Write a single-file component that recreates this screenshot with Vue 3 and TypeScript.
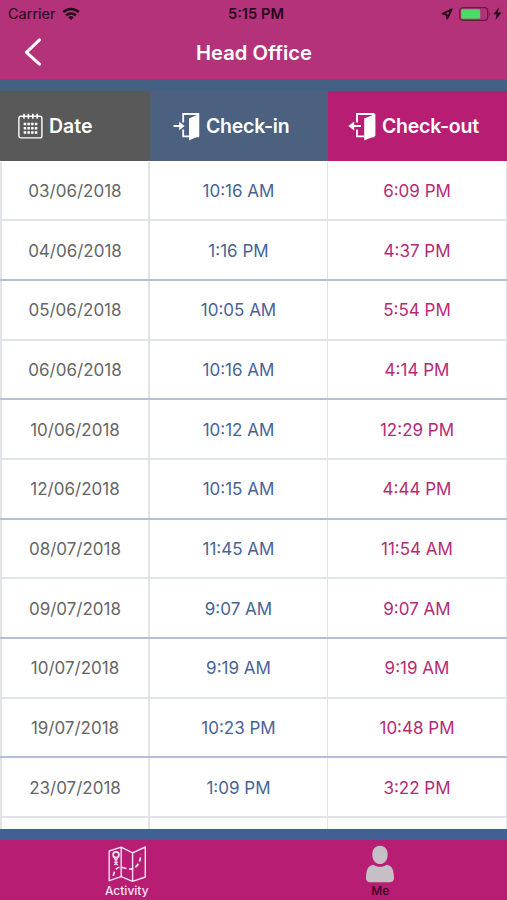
<script setup lang="ts">
interface Visit {
  date: string
  checkIn: string
  checkOut: string
}

const visits: Visit[] = [
  { date: '03/06/2018', checkIn: '10:16 AM', checkOut: '6:09 PM' },
  { date: '04/06/2018', checkIn: '1:16 PM', checkOut: '4:37 PM' },
  { date: '05/06/2018', checkIn: '10:05 AM', checkOut: '5:54 PM' },
  { date: '06/06/2018', checkIn: '10:16 AM', checkOut: '4:14 PM' },
  { date: '10/06/2018', checkIn: '10:12 AM', checkOut: '12:29 PM' },
  { date: '12/06/2018', checkIn: '10:15 AM', checkOut: '4:44 PM' },
  { date: '08/07/2018', checkIn: '11:45 AM', checkOut: '11:54 AM' },
  { date: '09/07/2018', checkIn: '9:07 AM', checkOut: '9:07 AM' },
  { date: '10/07/2018', checkIn: '9:19 AM', checkOut: '9:19 AM' },
  { date: '19/07/2018', checkIn: '10:23 PM', checkOut: '10:48 PM' },
  { date: '23/07/2018', checkIn: '1:09 PM', checkOut: '3:22 PM' },
  { date: '', checkIn: '', checkOut: '' },
]
</script>

<template>
  <div class="screen">
    <header class="top">
      <div class="status">
        <div class="carrier">
          <span>Carrier</span>
          <svg width="18" height="13" viewBox="0 0 18 13" fill="none" stroke="#26071b" stroke-width="2.5">
            <path d="M1.2 5.2a11.2 11.2 0 0 1 15.6 0" />
            <path d="M4 8.4a7.2 7.2 0 0 1 10 0" />
            <path d="M6.2 10.3a4.1 4.1 0 0 1 5.6 0L9 13z" fill="#26071b" stroke="none" />
          </svg>
        </div>
        <span class="clock">5:15 PM</span>
        <div class="power">
          <svg class="locate" width="12" height="12" viewBox="0 0 12 12" fill="none" stroke="#26071b" stroke-width="1.8" stroke-linejoin="round">
            <path d="M10.8 1.2 1.6 5.7l3.900.8.7 4z" />
          </svg>
          <svg class="battery" width="33" height="14" viewBox="0 0 33 14">
            <rect x=".7" y=".7" width="28" height="12.6" rx="3" fill="none" stroke="#681a49" stroke-width="1.2" />
            <rect x="2.2" y="2.2" width="19" height="9.6" rx="1.4" fill="#4cdb65" />
            <path d="M30.3 4.8q1.9 2.2 0 4.4z" fill="#681a49" />
          </svg>
          <svg width="9" height="13" viewBox="0 0 9 13"><path d="M6 .3.4 7.300h3.200L2.600 12.700 8.600 5.400H5z" fill="#26071b" /></svg>
        </div>
      </div>
      <div class="nav">
        <svg class="back" width="18" height="28" viewBox="0 0 18 28" fill="none" stroke="#fff" stroke-width="3" stroke-linecap="round" stroke-linejoin="round">
          <path d="M15.5 1.900 2.400 14.300l13.100 11.900" />
        </svg>
        <h1>Head Office</h1>
      </div>
    </header>

    <main class="body">
      <div class="row heads">
        <div class="head date">
          <svg width="25" height="26" viewBox="0 0 25 26" fill="none" stroke="#fff" stroke-width="1.4">
            <rect x=".9" y="3.3" width="23" height="21.6" rx="2" />
            <path d="M6 .7v5M10.400.7v5M14.800.7v5M19.200.7v5" stroke-width="1.6" />
            <path d="M5.700 11h13.600M5.700 15.300h13.600M5.700 19.600h13.600" stroke-width="2.500" stroke-dasharray="2.500 1.200" />
          </svg>
          <span>Date</span>
        </div>
        <div class="head in">
          <svg width="27" height="29" viewBox="0 0 27 29">
            <path d="M10.200 10.500V2h15v22.400h-5.500M10.200 17.500v6.900h6" fill="none" stroke="#fff" stroke-width="1.800" />
            <path d="M16 6.600 26.200 2v21.800L16 28.600z" fill="#fff" />
            <path d="M.5 14h7" stroke="#fff" stroke-width="2" />
            <path d="m6.200 9.700 5.400 4.300-5.400 4.300z" fill="#fff" />
          </svg>
          <span>Check-in</span>
        </div>
        <div class="head out">
          <svg width="28" height="29" viewBox="0 0 28 29">
            <path d="M9 10.500V2h16.500v22.400H20M9 17.500v6.900h7" fill="none" stroke="#fff" stroke-width="1.800" />
            <path d="M16.200 6.600 27.400 2v21.800l-11.200 4.800z" fill="#fff" />
            <path d="M5 14h8" stroke="#fff" stroke-width="2" />
            <path d="M.4 14 6.200 9.500v9z" fill="#fff" />
          </svg>
          <span>Check-out</span>
        </div>
      </div>
      <div class="list">
        <div v-for="(visit, i) in visits" :key="i" class="row entry">
          <div class="cell date">{{ visit.date }}</div>
          <div class="cell in">{{ visit.checkIn }}</div>
          <div class="cell out">{{ visit.checkOut }}</div>
        </div>
      </div>
    </main>

    <nav class="tabs">
      <div class="tab activity">
        <svg width="40" height="38" viewBox="0 0 40 38" fill="none" stroke="#ffe3f5" stroke-width="1.4" stroke-linejoin="round">
          <path d="M2.200 6 14.200 2.200l11.400 5.700L38.300 2v30L25.600 36.300l-11.400-4.600L2.200 35.700zM14.200 2.200v29.500M25.600 7.900v28.400" />
          <circle cx="9" cy="9.800" r="2.900" stroke-width="1.700" />
          <path d="m6.900 12 2.100 4 2.100-4M7.400 16.700l3.200 3.200M10.600 16.700l-3.200 3.200" />
          <path d="M6.300 31c1-7.500 5-9.700 9.200-8.500 6.500 1.800 9.800 2.700 13.300-.6 3.200-3.100 5-6.800 4.700-12.500" stroke-width="1.700" stroke-dasharray="4.500 2.500" />
        </svg>
        <span>Activity</span>
      </div>
      <div class="tab me">
        <svg width="30" height="38" viewBox="0 0 30 38" fill="#c6bfc5">
          <path d="M15 .8c5 0 7.700 3.500 7.700 8.700 0 5.400-3 9.600-7.700 9.600s-7.700-4.200-7.700-9.600C7.300 4.300 10 .8 15 .8z" />
          <path d="M8.500 19.700c3.900 2.700 9.100 2.700 13 0C27 20.300 29 24.500 29 33.500c0 2.300-1.700 3.700-4.500 3.700h-19C2.700 37.200 1 35.800 1 33.500 1 24.500 3 20.300 8.500 19.700z" />
        </svg>
        <span>Me</span>
      </div>
    </nav>
  </div>
</template>

<style>
body {
  margin: 0;
  overflow: hidden;
}
</style>

<style scoped>
.screen {
  width: 507px;
  height: 900px;
  display: flex;
  flex-direction: column;
  overflow: hidden;
  background: #fff;
  font-family: Inter, "Liberation Sans", sans-serif;
}
svg {
  display: block;
  flex: none;
}
.top {
  height: 79px;
  flex: none;
  background: #b33279;
}
.status {
  display: grid;
  grid-template-columns: 1fr auto 1fr;
  align-items: center;
  height: 27px;
  padding: 0 5px 0 8px;
  font-size: 14.5px;
  color: #26071b;
}
.carrier,
.power {
  display: flex;
  align-items: center;
}
.carrier {
  gap: 6px;
}
.clock {
  font-weight: 600;
  font-size: 14.7px;
  padding-left: 2px;
}
.power {
  justify-content: flex-end;
}
.locate {
  margin-right: 6px;
}
.battery {
  margin-right: 1px;
}
.nav {
  display: grid;
  grid-template-columns: 44px 1fr 44px;
  align-items: center;
  height: 50px;
}
.back {
  margin-left: 24px;
}
h1 {
  margin: 0;
  padding: 1px 0 0 1px;
  font-size: 20.2px;
  font-weight: 600;
  text-align: center;
  color: #fff;
}
.body {
  height: 761px;
  flex: none;
  box-sizing: border-box;
  border-top: 12px solid #446083;
  border-bottom: 11px solid #416093;
  overflow: hidden;
}
.row {
  display: grid;
  grid-template-columns: 150px 178px 179px;
}
.heads {
  height: 70px;
}
.head {
  display: flex;
  align-items: center;
  font-size: 19.5px;
  letter-spacing: -0.25px;
  font-weight: 600;
  color: #fff;
  box-sizing: border-box;
  white-space: nowrap;
}
.head.date {
  padding-left: 18px;
  gap: 6px;
  letter-spacing: 0;
  background: #595959;
}
.head.in {
  padding-left: 23px;
  gap: 6px;
  background: #4c6080;
}
.head.out {
  padding-left: 20px;
  gap: 6px;
  background: #b61d73;
}
.list {
  padding-top: 0.8px;
}
.entry {
  height: 59.65px;
  box-sizing: border-box;
  border-bottom: 2px solid #e0e3e8;
}
.entry:nth-child(even) {
  border-bottom-color: #b3bfd6;
}
.cell {
  display: flex;
  align-items: center;
  justify-content: center;
  padding-top: 1px;
  box-sizing: border-box;
  font-size: 17px;
}
.cell.date {
  color: #666;
  border-left: 2px solid #e0e3e8;
  border-right: 2px solid #e0e3e8;
}
.cell.in {
  color: #486496;
  border-right: 1px solid #e0e3e8;
}
.cell.out {
  color: #b52a75;
  border-right: 1px solid #e0e3e8;
}
.tabs {
  height: 60px;
  flex: none;
  display: grid;
  grid-template-columns: 1fr 1fr;
  background: #b61d73;
}
.tab {
  display: flex;
  flex-direction: column;
  align-items: center;
  padding-top: 5px;
  font-size: 12px;
  font-weight: 500;
  line-height: 15px;
}
.activity {
  color: #ffe3f5;
}
.me {
  color: #36071f;
}
</style>
